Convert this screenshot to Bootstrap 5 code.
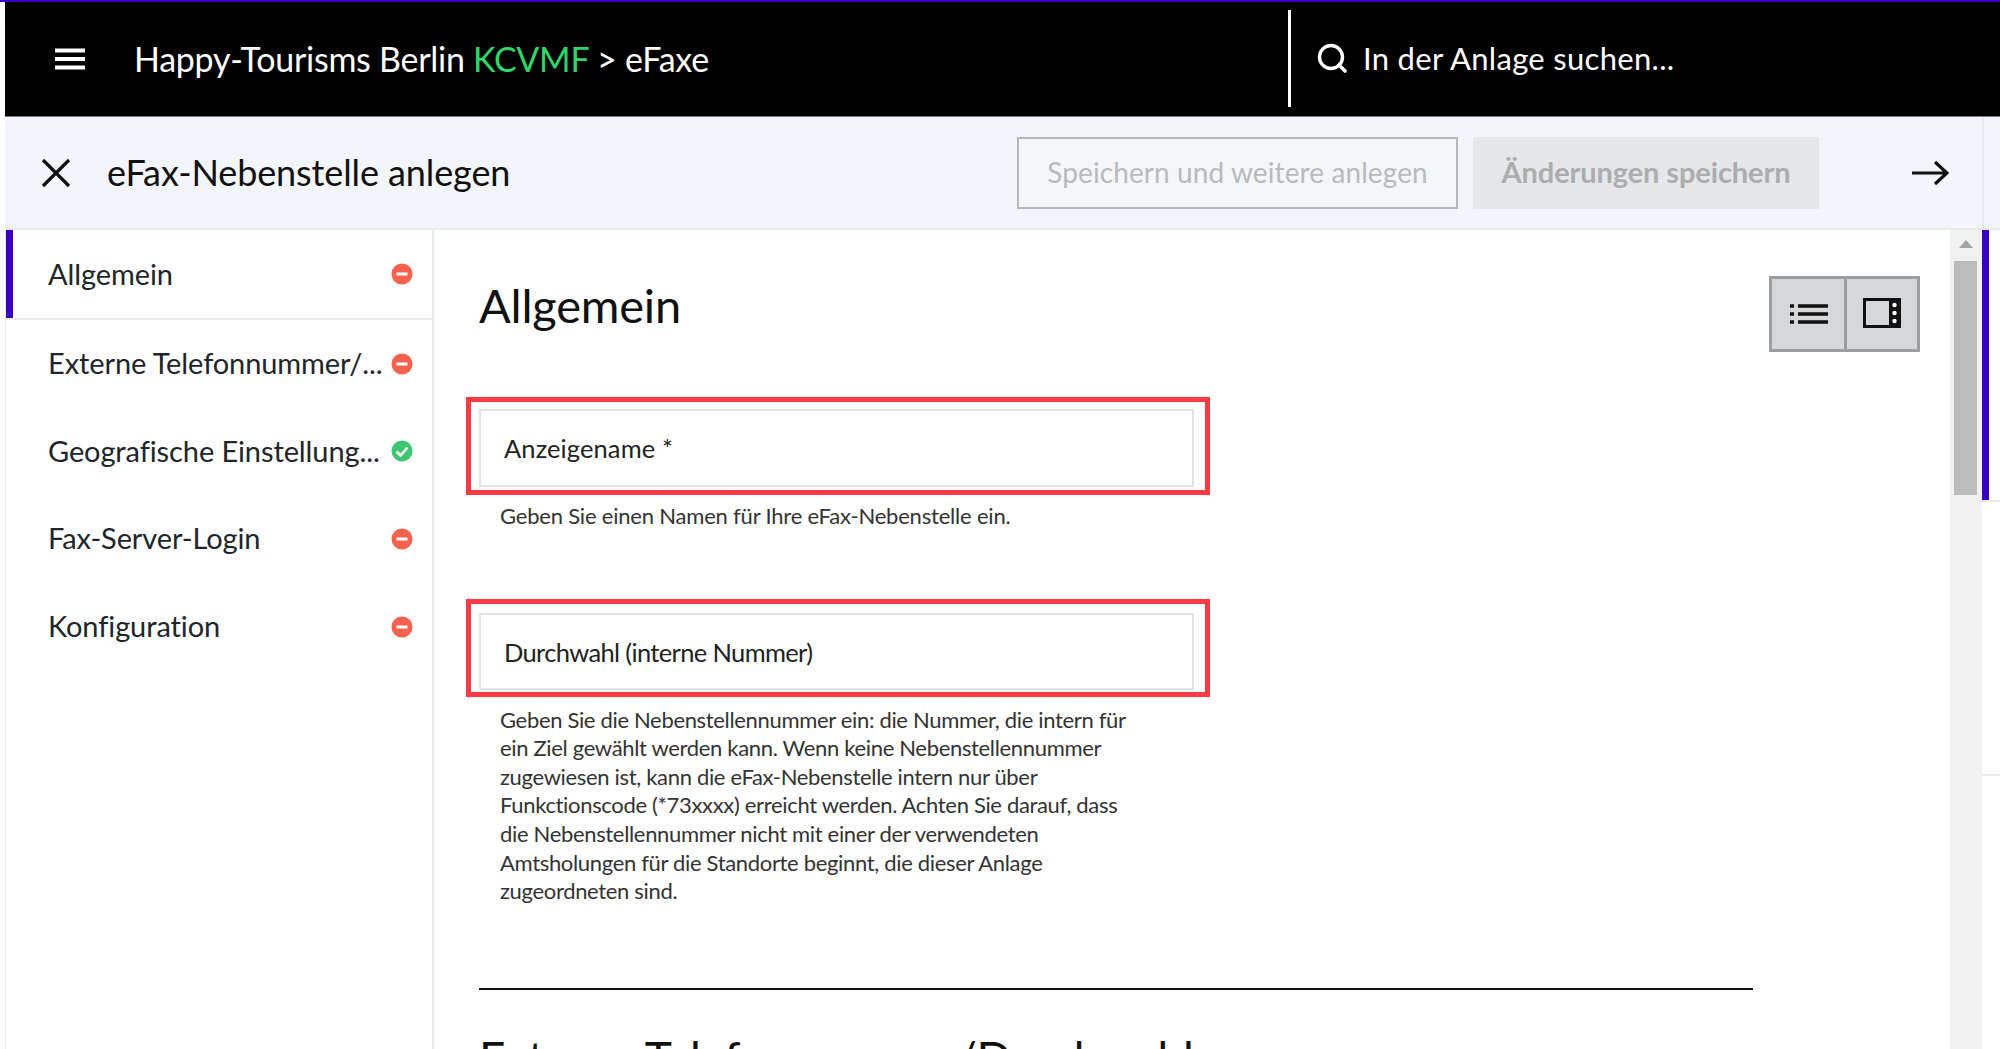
<!DOCTYPE html>
<html lang="de">
<head>
<meta charset="utf-8">
<title>eFax-Nebenstelle anlegen</title>
<link href="https://cdn.jsdelivr.net/npm/bootstrap@5.3.0/dist/css/bootstrap.min.css" rel="stylesheet">
<style>
html,body{height:100%;overflow:hidden;background:#fff}
body{font-family:"Lato","Liberation Sans",sans-serif;color:#111;border-top:2px solid #3a00c8;padding-left:5px}
.topbar{height:115px;background:#000;color:#fff;border-bottom:1px solid #777}
.burger{width:30px;margin-left:50px;margin-right:49px}
.crumb{font-size:34px;letter-spacing:-.26px;line-height:1}
.crumb-green{color:#30d668}
.search-zone{margin-left:auto;width:712px;height:97px;border-left:3px solid #fff;padding-left:26px;gap:16px;margin-top:-2px}
.search-zone span{font-size:31px;letter-spacing:.3px}
.headbar{height:113px;background:#f2f5f9;border-bottom:2px solid #e8ebee;padding-left:36px}
.headbar h1{font-size:36px;font-weight:400;margin:0 0 0 36px;letter-spacing:-.1px}
.btn-ghost,.btn-ghost:disabled{width:441px;height:72px;margin-left:auto;border:2px solid #b5b7b9;border-radius:0;background:#f4f7fa;color:#b9babb;font-size:28px;letter-spacing:.1px;opacity:1;padding:0 0 2px}
.btn-save,.btn-save:disabled{width:346px;height:72px;margin-left:15px;border:0;border-radius:0;background:#e5e7e9;color:#acadae;font-size:29px;font-weight:700;letter-spacing:-.1px;opacity:1;padding:0 0 2px}
.headbar .go{margin-left:93px;margin-right:33px;width:37px}
.headbar .endline{width:18px;align-self:stretch;border-left:2px solid #e8ebee}
.bodyrow{height:819px}
.side{width:429px;border-right:2px solid #e8ebee;border-left:1px solid #e8ebee}
.side-item{height:87.6px;padding:0 19px 0 42px;font-size:29px;letter-spacing:-.1px;border:0;white-space:nowrap}
.side-item.sel{height:90px;border-bottom:2px solid #e8ebee;box-shadow:inset 7px 0 0 #3a00c8}
.side-item svg{width:22px;height:22px;flex:none}
.side-item span{overflow:hidden;flex:1;padding-bottom:2px}
.side-item.sel span{padding-bottom:0}
.pane{width:1516px;padding:0 0 0 45px;overflow:hidden}
.pane h2{font-size:46px;font-weight:400;line-height:1;letter-spacing:-.2px;margin:0}
.pane h2.title-main{font-size:47px;margin-top:52px}
.viewbtns{width:151px;height:76px;margin:46px 30px 0 0;background:#d5d7d9;border:3px solid #9c9d9e;border-radius:0}
.viewbtns .btn{width:50%;padding:0 0 3px;border:0;border-radius:0;background:transparent}
.viewbtns .btn+.btn{border-left:3px solid #9c9d9e;margin-left:0}
.redbox{width:744px;margin-left:-13px;border:5px solid #fa3c42;padding:7px 0 3px 8px}
.redbox.box-top{margin-top:45px}
.redbox.box-second{margin-top:68px;padding:9px 0 2px 8px}
.redbox.box-second .fieldtxt{height:77px}
.fieldtxt{display:block;width:715px;height:78px;margin:0;border:2px solid #e3e3e3;border-radius:0;padding:0 23px;font-size:25.5px;letter-spacing:-.3px;line-height:74px;color:#222}
.redbox.box-second .fieldtxt{letter-spacing:-.65px}
.redbox.box-top .fieldtxt{letter-spacing:.1px}
.hint{margin:7px 0 0 21px;white-space:nowrap;font-size:22px;line-height:28.6px;letter-spacing:-.2px;color:#333}
.hint.hint-long{margin-top:9px;letter-spacing:-.33px}
.rule{width:1274px;height:2px;background:#111;opacity:1;border:0;margin:82px 0 0}
.pane h2.next-head{margin-top:45px}
.scrolltrack{width:32px;background:#f1f1f1;padding:10px 5px 0 4px}
.scrollup{width:0;height:0;border:7px solid transparent;border-top:0;border-bottom:8px solid #a3a3a3;margin:0 auto 13px}
.scrollthumb{height:234px;background:#bcbcbc}
.sidestrip{flex:1}
.sideline{height:272px;border-bottom:2px solid #eaeaea;box-shadow:inset 7px 0 0 #3a00c8}
.sideline2{margin-top:272px;border-top:2px solid #eaeaea}
</style>
</head>
<body>
<header class="topbar d-flex align-items-center">
  <svg class="burger" viewBox="0 0 30 22" height="22" aria-hidden="true"><path d="M0 2.5h30M0 11h30M0 19.5h30" stroke="#fff" stroke-width="4"/></svg>
  <div class="crumb">Happy-Tourisms Berlin <span class="crumb-green">KCVMF</span> &gt; eFaxe</div>
  <div class="search-zone d-flex align-items-center">
    <svg width="30" height="30" viewBox="0 0 30 30" aria-hidden="true"><circle cx="14" cy="14" r="11.5" fill="none" stroke="#fff" stroke-width="3.4"/><path d="M22 22l6 6" stroke="#fff" stroke-width="3.6" stroke-linecap="round"/></svg>
    <span>In der Anlage suchen...</span>
  </div>
</header>
<section class="headbar d-flex align-items-center">
  <svg width="30" height="30" viewBox="0 0 30 30" aria-hidden="true"><path d="M2 2l26 26M28 2L2 28" stroke="#111" stroke-width="3.2"/></svg>
  <h1>eFax-Nebenstelle anlegen</h1>
  <button class="btn btn-ghost" disabled>Speichern und weitere anlegen</button>
  <button class="btn btn-save" disabled>Änderungen speichern</button>
  <svg class="go" height="26" viewBox="0 0 37 26" aria-hidden="true"><path d="M0 13h35M23 2l12 11-12 11" fill="none" stroke="#111" stroke-width="3.2"/></svg>
  <div class="endline"></div>
</section>
<main class="bodyrow d-flex">
  <nav class="side list-group list-group-flush flex-shrink-0">
    <div class="list-group-item side-item sel d-flex align-items-center"><span>Allgemein</span><svg viewBox="0 0 22 22"><circle cx="11" cy="11" r="10.5" fill="#f4614e"/><path d="M5.5 11h11" stroke="#fff" stroke-width="3"/></svg></div>
    <div class="list-group-item side-item d-flex align-items-center"><span>Externe Telefonnummer/...</span><svg viewBox="0 0 22 22"><circle cx="11" cy="11" r="10.5" fill="#f4614e"/><path d="M5.5 11h11" stroke="#fff" stroke-width="3"/></svg></div>
    <div class="list-group-item side-item d-flex align-items-center"><span>Geografische Einstellung...</span><svg viewBox="0 0 22 22"><circle cx="11" cy="11" r="10.5" fill="#3fc672"/><path d="M5.5 11.5l4 4 7-8" fill="none" stroke="#fff" stroke-width="2.6"/></svg></div>
    <div class="list-group-item side-item d-flex align-items-center"><span>Fax-Server-Login</span><svg viewBox="0 0 22 22"><circle cx="11" cy="11" r="10.5" fill="#f4614e"/><path d="M5.5 11h11" stroke="#fff" stroke-width="3"/></svg></div>
    <div class="list-group-item side-item d-flex align-items-center"><span>Konfiguration</span><svg viewBox="0 0 22 22"><circle cx="11" cy="11" r="10.5" fill="#f4614e"/><path d="M5.5 11h11" stroke="#fff" stroke-width="3"/></svg></div>
  </nav>
  <div class="pane flex-shrink-0">
    <div class="d-flex justify-content-between align-items-start">
      <h2 class="title-main">Allgemein</h2>
      <div class="viewbtns btn-group" role="group">
        <button class="btn" aria-label="Liste"><svg width="38" height="22" viewBox="0 0 38 22"><path d="M0 3h4M0 11h4M0 19h4" stroke="#111" stroke-width="3.4"/><path d="M8 3h30M8 11h30M8 19h30" stroke="#111" stroke-width="3.4"/></svg></button>
        <button class="btn" aria-label="Seitenleiste"><svg width="38" height="30" viewBox="0 0 38 30"><rect x="1.5" y="1.5" width="35" height="27" fill="none" stroke="#111" stroke-width="3"/><rect x="26" y="1" width="11" height="28" fill="#111"/><circle cx="31.5" cy="7" r="2.2" fill="#fff"/><circle cx="31.5" cy="15" r="2.2" fill="#fff"/><circle cx="31.5" cy="23" r="2.2" fill="#fff"/></svg></button>
      </div>
    </div>
    <div class="redbox box-top"><label class="fieldtxt">Anzeigename *</label></div>
    <p class="hint">Geben Sie einen Namen für Ihre eFax-Nebenstelle ein.</p>
    <div class="redbox box-second"><label class="fieldtxt">Durchwahl (interne Nummer)</label></div>
    <p class="hint hint-long">Geben Sie die Nebenstellennummer ein: die Nummer, die intern für<br>ein Ziel gewählt werden kann. Wenn keine Nebenstellennummer<br>zugewiesen ist, kann die eFax-Nebenstelle intern nur über<br>Funkctionscode (*73xxxx) erreicht werden. Achten Sie darauf, dass<br>die Nebenstellennummer nicht mit einer der verwendeten<br>Amtsholungen für die Standorte beginnt, die dieser Anlage<br>zugeordneten sind.</p>
    <hr class="rule">
    <h2 class="next-head">Externe Telefonnummer/Durchwahl</h2>
  </div>
  <div class="scrolltrack flex-shrink-0"><div class="scrollup"></div><div class="scrollthumb"></div></div>
  <div class="sidestrip"><div class="sideline"></div><div class="sideline2"></div></div>
</main>
<script src="https://cdn.jsdelivr.net/npm/bootstrap@5.3.0/dist/js/bootstrap.bundle.min.js"></script>
</body>
</html>
